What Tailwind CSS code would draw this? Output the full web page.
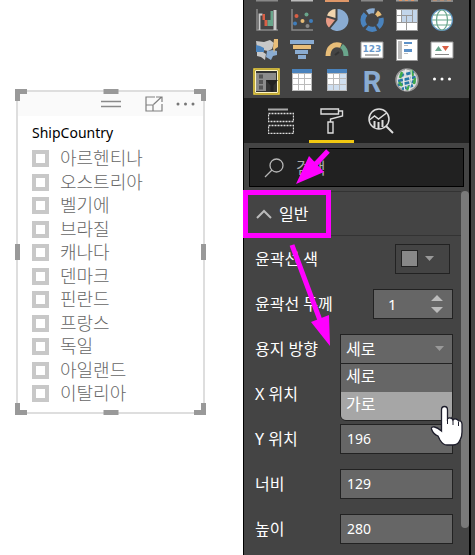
<!DOCTYPE html>
<html lang="ko">
<head>
<meta charset="utf-8">
<title>ShipCountry</title>
<script src="https://cdn.jsdelivr.net/npm/@tailwindcss/browser@4"></script>
</head>
<body class="relative flex min-h-screen items-start overflow-hidden bg-white font-['Noto_Sans','Noto_Sans_CJK_KR',sans-serif]">

<main class="flex-1 pt-[90px] pr-[38px] pl-4">
  <section class="relative flex min-h-[324px] flex-col border-2 border-[#dedede] pb-[7px]">
    <header class="flex h-6 items-center bg-[#fafafa] pr-2 pl-[82px]">
      <svg class="h-2 w-[22px]" viewBox="0 0 22 8" fill="none" stroke="#8a8a8a" stroke-width="1.500"><path d="M1 1.500h20M1 6.500h20"/></svg>
      <button type="button" aria-label="포커스 모드" class="ml-auto"><svg class="h-4 w-[18px]" viewBox="0 0 18 16" fill="none" stroke="#808080" stroke-width="1.200"><path d="M10 1H1v14h16V8M1 9h7v6M8.500 8.500l8-7.500M11 1h6v5"/></svg></button>
      <button type="button" aria-label="추가 옵션" class="ml-3"><svg class="h-4 w-5" viewBox="0 0 20 16" fill="#777"><circle cx="3" cy="8" r="1.500"/><circle cx="10.500" cy="8" r="1.500"/><circle cx="18" cy="8" r="1.500"/></svg></button>
    </header>
    <h2 class="mt-[7px] pl-[14px] text-sm leading-5 text-black">ShipCountry</h2>
    <ul class="mt-1 flex flex-1 flex-col justify-between pl-[14px] text-[18px] leading-[23px] text-[#666] font-light">
      <li><label class="flex items-center gap-[11px]"><input type="checkbox" class="size-[17px] appearance-none border-4 border-[#c8c8c8] bg-white">아르헨티나</label></li>
      <li><label class="flex items-center gap-[11px]"><input type="checkbox" class="size-[17px] appearance-none border-4 border-[#c8c8c8] bg-white">오스트리아</label></li>
      <li><label class="flex items-center gap-[11px]"><input type="checkbox" class="size-[17px] appearance-none border-4 border-[#c8c8c8] bg-white">벨기에</label></li>
      <li><label class="flex items-center gap-[11px]"><input type="checkbox" class="size-[17px] appearance-none border-4 border-[#c8c8c8] bg-white">브라질</label></li>
      <li><label class="flex items-center gap-[11px]"><input type="checkbox" class="size-[17px] appearance-none border-4 border-[#c8c8c8] bg-white">캐나다</label></li>
      <li><label class="flex items-center gap-[11px]"><input type="checkbox" class="size-[17px] appearance-none border-4 border-[#c8c8c8] bg-white">덴마크</label></li>
      <li><label class="flex items-center gap-[11px]"><input type="checkbox" class="size-[17px] appearance-none border-4 border-[#c8c8c8] bg-white">핀란드</label></li>
      <li><label class="flex items-center gap-[11px]"><input type="checkbox" class="size-[17px] appearance-none border-4 border-[#c8c8c8] bg-white">프랑스</label></li>
      <li><label class="flex items-center gap-[11px]"><input type="checkbox" class="size-[17px] appearance-none border-4 border-[#c8c8c8] bg-white">독일</label></li>
      <li><label class="flex items-center gap-[11px]"><input type="checkbox" class="size-[17px] appearance-none border-4 border-[#c8c8c8] bg-white">아일랜드</label></li>
      <li><label class="flex items-center gap-[11px]"><input type="checkbox" class="size-[17px] appearance-none border-4 border-[#c8c8c8] bg-white">이탈리아</label></li>
    </ul>
    <!-- Resize handles -->
    <i class="absolute -top-[3px] -left-[3px] size-3 border-t-5 border-l-5 border-[#999]"></i>
    <i class="absolute -top-[3px] -right-[3px] size-3 border-t-5 border-r-5 border-[#999]"></i>
    <i class="absolute -bottom-[3px] -left-[3px] size-3 border-b-5 border-l-5 border-[#999]"></i>
    <i class="absolute -right-[3px] -bottom-[3px] size-3 border-r-5 border-b-5 border-[#999]"></i>
    <i class="absolute -top-[3px] left-1/2 h-[5px] w-[15px] -translate-x-1/2 bg-[#999]"></i>
    <i class="absolute -bottom-[3px] left-1/2 h-[5px] w-[15px] -translate-x-1/2 bg-[#999]"></i>
    <i class="absolute top-1/2 -left-[3px] h-4 w-[5px] -translate-y-1/2 bg-[#999]"></i>
    <i class="absolute top-1/2 -right-[3px] h-4 w-[5px] -translate-y-1/2 bg-[#999]"></i>
  </section>
</main>

<aside class="flex min-h-screen w-[232px] flex-none bg-[#444]">
  <div class="relative flex-1 border-x border-black text-white">
    <!-- Visualization gallery -->
    <div class="h-[98px] overflow-hidden">
      <div class="-mt-[22px] grid grid-cols-6 gap-y-[6px] pr-[9px] pl-[5px]">
        <svg class="mx-auto size-6" viewBox="0 0 24 24"><path d="M1 22.500h22" stroke="#888" stroke-width="2"/></svg>
        <svg class="mx-auto size-6" viewBox="0 0 24 24"><path d="M1 22.500h22" stroke="#bbb" stroke-width="2"/></svg>
        <svg class="mx-auto size-6" viewBox="0 0 24 24"><path d="M0 22.500h24" stroke="#df9768" stroke-width="3"/></svg>
        <svg class="mx-auto size-6" viewBox="0 0 24 24"><path d="M1 22.500h22" stroke="#888" stroke-width="2"/></svg>
        <svg class="mx-auto size-6" viewBox="0 0 24 24"><path d="M1 22.500h22" stroke="#999" stroke-width="2"/><path d="M4 22h3M10 22h3M16 22h3" stroke="#df9768" stroke-width="2"/></svg>
        <svg class="mx-auto size-6" viewBox="0 0 24 24"><path d="M1 23h22" stroke="#888" stroke-width="2"/><path d="M3 21.500h4M10 21.500h4M17 21.500h4" stroke="#df9768" stroke-width="2"/></svg>

        <svg class="mx-auto size-6" viewBox="0 0 24 24"><path d="M2 1v21h21" fill="none" stroke="#888" stroke-width="1.500"/><path d="M4.500 22V6.500h3" fill="none" stroke="#ccc" stroke-width="1.800"/><path d="M18.500 2h3v20h-3z" fill="#ccc"/><path d="M7.500 6h2.500v6H7.500zM9.500 12h3v6h-3z" fill="#d95f45"/><path d="M12.500 12h3v6h-3zM15.500 3h2.500v15h-2.500z" fill="#69a58b"/></svg>
        <svg class="mx-auto size-6" viewBox="0 0 24 24"><path d="M2 1v21h21" fill="none" stroke="#888" stroke-width="1.500"/><circle cx="6.500" cy="8" r="2" fill="#d95f45"/><circle cx="16.500" cy="6.500" r="2" fill="#69a58b"/><circle cx="5" cy="15.500" r="2" fill="#3f7dbb"/><circle cx="12.500" cy="13" r="2" fill="#e8bd78"/><circle cx="21" cy="13" r="2" fill="#3f7dbb"/><circle cx="17.500" cy="18" r="2" fill="#888"/></svg>
        <svg class="mx-auto size-6" viewBox="0 0 24 24"><path d="M12.500 12V1a11 11 0 1 1-7 19.500z" fill="#8aacd2"/><path d="M10.500 10V1A10 10 0 0 0 2 7.500z" fill="#f1d5ae"/><path d="M10 12L1.500 9.500C0 14 2 17.500 4 19.500z" fill="#e89b86"/></svg>
        <svg class="mx-auto size-6" viewBox="0 0 24 24" fill="none" stroke-width="5"><path d="M21 10a9 9 0 0 1-3 9M16 20.500a9 9 0 0 1-9-1M5 18A9 9 0 0 1 5.500 6" stroke="#4a83bd"/><path d="M7.500 4.500a9 9 0 0 1 7-1.500" stroke="#8aacd2"/><path d="M16.500 4.500a9 9 0 0 1 3 3.500" stroke="#e8bd78"/></svg>
        <svg class="mx-auto size-6" viewBox="0 0 24 24"><path d="M1 1h22v22H1z" fill="#999"/><path d="M2 2h4v5H2zM2 8h4v6H2zM2 15h9v7H2zM12 15h10v7H12z" fill="#fff"/><path d="M7 2h10v5H7zM7 8h4v6H7zM12 8h5v6h-5zM18 2h4v12h-4z" fill="#c2d5ea"/></svg>
        <svg class="mx-auto size-6" viewBox="0 0 24 24" fill="#fff" stroke="#69a58b" stroke-width="1.200"><circle cx="12" cy="12" r="10.500" stroke="#5d93bf"/><ellipse cx="12" cy="12" rx="5.500" ry="10" fill="none"/><path d="M3 7h18M2 12h20M3 17h18"/></svg>

        <svg class="mx-auto size-6" viewBox="0 0 24 24"><path d="M1 3l8 1 6-2 4 3-2 6-4 2-5-1-6-1z" fill="#c8c8c8"/><path d="M1 7l4 1 4 2v4H1z" fill="#4a83bd"/><path d="M2 14h6l3 2-1 6-4-3-4-1z" fill="#c8c8c8"/><path d="M12 13l6-1 4 1v4l-4 1-2 4-5-3z" fill="#8aacd2"/><path d="M19 1h4v8l-3 2-1 4-1-5z" fill="#e8bd78"/></svg>
        <svg class="mx-auto size-6" viewBox="0 0 24 24"><path d="M0 2h24v4H0zM5 12h13v4H5zM8 17h8v4H8z" fill="#8aacd2"/><path d="M3 7h18v4H3z" fill="#e8bd78"/></svg>
        <svg class="mx-auto size-6" viewBox="0 0 24 24" fill="none" stroke-width="5"><path d="M3 18C3 9 9 5 16 7.500" stroke="#e8bd78"/><path d="M16.500 8q4.500 3 4.500 10" stroke="#69a58b"/><path d="M10 17l4-3" stroke="#333" stroke-width="2"/></svg>
        <svg class="mx-auto size-6" viewBox="0 0 24 24"><path d="M1 4h22v16H1z" fill="#fff" stroke="#999"/><text x="12" y="14" text-anchor="middle" font-family="DejaVu Sans" font-weight="bold" font-size="9" fill="#6a99cb">123</text><path d="M5 17h14" stroke="#666"/></svg>
        <svg class="mx-auto size-6" viewBox="0 0 24 24"><path d="M1.500 1.500h21v21h-21z" fill="#fff" stroke="#999"/><path d="M3 3h4v18H3z" fill="#bbb"/><path d="M9 4h8v2H9zM9 11h8v3H9z" fill="#5c91c8"/><path d="M9 7h4v1H9zM9 15h4v1H9z" fill="#bbb"/></svg>
        <svg class="mx-auto size-6" viewBox="0 0 24 24"><path d="M1 4h22v16H1z" fill="#fff" stroke="#999"/><path d="M5 13l3.500-5 3.500 5z" fill="#69a58b"/><path d="M12 8h7l-3.500 5z" fill="#d95f45"/><path d="M5 16.500h14" stroke="#888"/></svg>

        <svg class="mx-auto size-[27px]" viewBox="0 0 27 27"><path d="M1 1h25v25H1z" fill="#333" stroke="#f2d43c" stroke-width="1.500"/><path d="M2.500 2.500h22v22h-22z" fill="none" stroke="#fff6c0"/><path d="M3 5h20v7H13v11H3z" fill="#8c8c8c"/><path d="M6 6.500h4v4H6zM6 12h4v4H6zM6 17.500h4v4H6z" fill="#555"/><path d="M13 12h12l-4.500 5.500V24h-3v-6.500z" fill="#222"/></svg>
        <svg class="mx-auto size-6" viewBox="0 0 24 24"><path d="M2 1h20v22H2z" fill="#bbb"/><path d="M2 1h20v4H2z" fill="#4a83bd"/><path d="M3 6h5v4H3zM9 6h5v4H9zM15 6h6v4h-6zM3 11h5v5H3zM9 11h5v5H9zM15 11h6v5h-6zM3 17h5v5H3zM9 17h5v5H9zM15 17h6v5h-6z" fill="#fff"/></svg>
        <svg class="mx-auto size-6" viewBox="0 0 24 24"><path d="M2 1h20v22H2z" fill="#bbb"/><path d="M2 1h20v4H2z" fill="#4a83bd"/><path d="M3 6h5v4H3zM9 6h5v4H9zM3 11h5v5H3zM9 11h5v5H9z" fill="#fff"/><path d="M15 6h6v4h-6zM15 11h6v5h-6zM3 17h5v5H3zM9 17h5v5H9zM15 17h6v5h-6z" fill="#cfdff0"/></svg>
        <svg class="mx-auto h-[27px] w-6" viewBox="0 0 24 27"><text x="12" y="24" text-anchor="middle" font-family="Roboto, sans-serif" font-weight="bold" font-size="29" fill="#8aacd2">R</text></svg>
        <svg class="mx-auto size-6" viewBox="0 0 24 24" fill="none"><circle cx="12" cy="12" r="11" fill="#ddd" stroke="#999" stroke-width="1.500"/><path d="M5 8l14-4M3 13l18-4M3 17l18-4M7 21l12-4" stroke="#2878a8" stroke-width="2.800" stroke-dasharray="5 1.500"/><path d="M7 4l-2 6M16 2l2 6M20 10l-1 6M4 14l3 4M14 18l-2 4" stroke="#3faa4c" stroke-width="2.500"/><path d="M11 1Q7 12 10 23M16 2q2 10-2 21" stroke="#eee"/></svg>
        <svg class="mx-auto size-6" viewBox="0 0 24 24" fill="#fff"><circle cx="4.500" cy="11" r="1.500"/><circle cx="12" cy="11" r="1.500"/><circle cx="19.500" cy="11" r="1.500"/></svg>
      </div>
    </div>

    <nav class="flex h-[45px] bg-[#212121] pl-[14px]">
      <button type="button" aria-label="필드" class="flex w-[51px] items-center justify-center pr-[5px]"><svg class="size-[26px]" viewBox="0 0 26 26" fill="none" stroke="#ddd"><path d="M0 1.500h20" stroke="#aaa" stroke-width="2"/><path d="M.5 5.500h25v8H.5zM.5 17.500h25v8H.5z" stroke-dasharray="2 1" stroke-width="1.300"/></svg></button>
      <button type="button" aria-label="서식" class="flex w-[45px] items-center justify-center border-b-3 border-[#f2c811]"><svg class="mt-[3px] h-[26px] w-6" viewBox="0 0 24 26" fill="none" stroke="#ddd" stroke-width="1.400"><path d="M1 1h17.500v5H1zM18.500 3h4v5L10.500 11v3M8 14h5v11H8z"/></svg></button>
      <button type="button" aria-label="분석" class="flex w-[54px] items-center justify-center"><svg class="size-[26px]" viewBox="0 0 26 26" fill="none" stroke="#ddd" stroke-width="1.500"><circle cx="11" cy="11" r="10"/><path d="M1.500 12l5-4 4 3 8-6" /><path d="M6.500 13v6M10.500 14v7M14.500 12v7" stroke-width="2"/><path d="M18 18l7 7" stroke-width="2"/></svg></button>
    </nav>

    <div class="px-[5px] pt-[5px] pb-1">
      <label class="flex h-[39px] items-center gap-3 border border-black bg-[#212121] pl-[14px]">
        <svg class="size-5 flex-none" viewBox="0 0 20 20" fill="none" stroke="#b5b5b5" stroke-width="1.300"><circle cx="12.500" cy="7.500" r="6.500"/><path d="M8 12l-7 7"/></svg>
        <input type="search" placeholder="검색" aria-label="검색" class="w-full bg-transparent text-[16px] outline-none placeholder:text-[#aaa]">
      </label>
    </div>

    <div class="flex">
      <div class="flex-1">
        <button type="button" class="flex h-[45px] w-full items-center gap-[7px] border-y border-[#333] pl-3 text-[16px]">
          <svg class="h-[10px] w-4" viewBox="0 0 16 10" fill="none" stroke="#bbb" stroke-width="2"><path d="M1 9l7-7 7 7"/></svg>일반
        </button>
        <div class="pr-2 pl-[11px] text-[16px] leading-6">
          <div class="flex h-[45px] items-center justify-between">
            <span>윤곽선 색</span>
            <button type="button" aria-label="윤곽선 색" class="mr-[3px] flex h-[30px] w-[55px] items-center gap-[7px] border border-[#222] pl-[5px]"><i class="size-[17px] border border-[#222] bg-[#888]"></i><svg class="h-[5px] w-[9px]" viewBox="0 0 9 5" fill="#999"><path d="M0 0h9L4.500 5z"/></svg></button>
          </div>
          <div class="flex h-[45px] items-center justify-between">
            <label for="weight">윤곽선 두께</label>
            <div class="flex h-[30px] w-20 items-center border border-[#222] bg-[#666] pr-[9px] pl-[14px]">
              <input id="weight" value="1" class="w-full bg-transparent text-[15px] outline-none">
              <svg class="h-5 w-3 flex-none" viewBox="0 0 12 20" fill="#bbb"><path d="M0 7l6-6 6 6zM0 13h12l-6 6z"/></svg>
            </div>
          </div>
          <div class="flex h-[45px] items-center justify-between">
            <label for="orientation">용지 방향</label>
            <div class="relative flex w-[113px] items-center">
              <select id="orientation" class="h-[30px] w-full appearance-none border border-[#222] bg-[#666] pl-[5px] text-[16px] outline-none"><option>세로</option><option>가로</option></select>
              <svg class="pointer-events-none absolute right-[9px] h-[5px] w-[9px]" viewBox="0 0 9 5" fill="#999"><path d="M0 0h9L4.500 5z"/></svg>
              <ul role="listbox" aria-label="용지 방향" class="absolute top-[29px] left-0 z-10 w-full overflow-hidden rounded-b-md border border-[#222] bg-[#666]">
                <li role="option" class="pb-1 pl-[5px] leading-6">세로</li>
                <li role="option" class="bg-[#a6a6a6] pb-1 pl-[5px] leading-6">가로</li>
              </ul>
            </div>
          </div>
          <div class="flex h-[45px] items-center justify-between"><label for="x">X 위치</label><input id="x" class="h-[30px] w-[113px] border border-[#222] bg-[#666] px-[7px] text-[14px]"></div>
          <div class="flex h-[45px] items-center justify-between"><label for="y">Y 위치</label><input id="y" value="196" class="h-[30px] w-[113px] border border-[#222] bg-[#666] px-[6px] text-[14px]"></div>
          <div class="flex h-[45px] items-center justify-between"><label for="w">너비</label><input id="w" value="129" class="h-[30px] w-[113px] border border-[#222] bg-[#666] px-[6px] text-[14px]"></div>
          <div class="flex h-[45px] items-center justify-between"><label for="h">높이</label><input id="h" value="280" class="h-[30px] w-[113px] border border-[#222] bg-[#666] px-[6px] text-[14px]"></div>
        </div>
      </div>
      <div class="mb-[23px] w-2 rounded-full bg-[#7a7a7a]"></div>
    </div>

    <!-- Callout frame, arrows and pointer -->
    <svg class="pointer-events-none absolute top-0 left-0 z-20 h-[460px] w-[232px]" viewBox="244 0 232 460" overflow="visible">
      <path d="M245.500 192.500h83v43h-83z" fill="none" stroke="#f0f" stroke-width="5"/>
      <path d="M328 151L312 168M292 245l29 78" stroke="#f0f" stroke-width="5"/>
      <path d="M296 184l13-28 15 16zM330 346l-19-24 18-7z" fill="#f0f"/>
      <path d="M441.500 410q0-3.500 3-3.500t3 3.500v9q1-1.500 3-1 2 0 2.500 2 1-1.500 3-1 2 .5 2.500 2 3-1 3.500 3v8q0 5-2 8-2 5-7 5h-6q-4 0-7-5l-2-4q-5-2-6.500-7-.5-2.500 3-2 3 .5 7 4z" fill="#fff" stroke="#1d1d2b" stroke-width="1.300"/>
      <path d="M447.500 418v6M453 420v5M458.500 422v4" stroke="#1d1d2b"/>
    </svg>
  </div>
  <div class="w-[5px] border-l border-black"></div>
</aside>
</body>
</html>
